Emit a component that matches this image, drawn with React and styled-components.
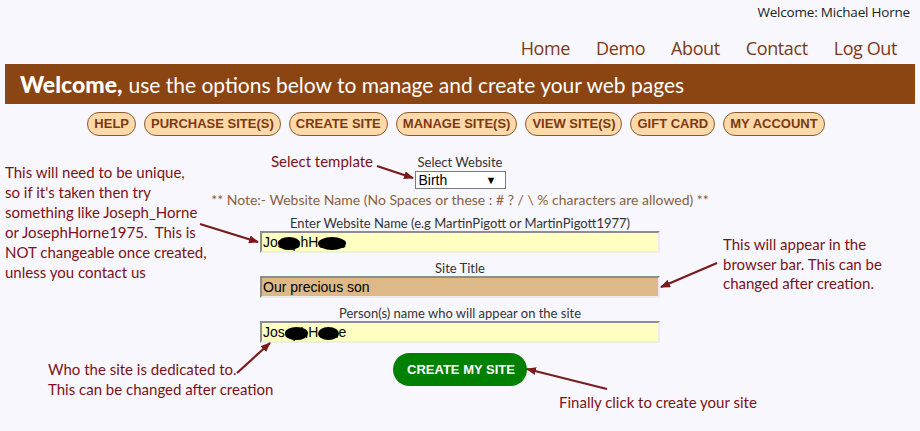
import React from 'react';
import styled, { createGlobalStyle } from 'styled-components';

const GlobalStyle = createGlobalStyle`
  body {
    margin: 0;
    background: #f7f7fd;
    font-family: Lato, "Open Sans", sans-serif;
  }
`;

const menuItems = [
  'HELP',
  'PURCHASE SITE(S)',
  'CREATE SITE',
  'MANAGE SITE(S)',
  'VIEW SITE(S)',
  'GIFT CARD',
  'MY ACCOUNT',
];

const navItems = ['Home', 'Demo', 'About', 'Contact', 'Log Out'];

// annotation arrows drawn over the screenshot: [x1, y1, tipX, tipY]
const arrows = [
  [377, 166, 413, 178],
  [200, 224, 258, 242],
  [717, 263, 661, 287],
  [237, 373, 270, 343],
  [607, 389, 527, 369],
];

const Page = styled.div`
  position: relative;
  width: 920px;
  height: 431px;
  overflow: hidden;
`;

const TopLine = styled.div`
  height: 24px;
  line-height: 24px;
  padding-right: 10px;
  text-align: right;
  font-family: "Open Sans", sans-serif;
  font-size: 13.5px;
  letter-spacing: -0.2px;
  color: #222;
`;

const Nav = styled.nav`
  display: flex;
  justify-content: flex-end;
  gap: 26px;
  height: 32px;
  padding: 8px 23px 0 0;
`;

const NavLink = styled.span`
  font-family: "Open Sans", sans-serif;
  font-size: 18px;
  line-height: 32px;
  letter-spacing: -0.4px;
  color: #7b3a16;
`;

const Banner = styled.div`
  display: flex;
  align-items: baseline;
  gap: 6px;
  height: 40px;
  margin: 0 5px;
  padding-left: 15px;
  background: #8b4513;
  color: #fff;
  line-height: 40px;
`;

const BannerStrong = styled.strong`
  font-size: 23px;
  font-weight: 900;
`;

const BannerText = styled.span`
  font-size: 21px;
`;

const Menu = styled.div`
  display: flex;
  justify-content: center;
  gap: 8px;
  margin-top: 8px;
  padding-right: 8px;
`;

const MenuButton = styled.span`
  height: 22px;
  line-height: 22px;
  padding: 0 6px;
  border: 1px solid #8b5a2b;
  border-radius: 12px;
  background: #fdd8a8;
  color: #7b3a12;
  font-family: "Liberation Sans", Arial, sans-serif;
  font-weight: bold;
  font-size: 13px;
`;

const Form = styled.div`
  display: flex;
  flex-direction: column;
  align-items: center;
`;

const Label = styled.div`
  margin-top: ${(p) => p.$top}px;
  line-height: 15px;
  font-size: 13px;
  color: #333;
`;

const Select = styled.div`
  display: flex;
  justify-content: space-between;
  align-items: center;
  box-sizing: border-box;
  width: 91px;
  height: 18px;
  margin-top: 1px;
  padding: 0 8px 0 3px;
  border: 1px solid #7a7a7a;
  background: #fff;
  font-family: "Liberation Sans", Arial, sans-serif;
  font-size: 14px;
  color: #000;
`;

const Caret = styled.span`
  font-size: 11px;
`;

const Note = styled.div`
  margin-top: 2px;
  line-height: 18px;
  font-size: 14px;
  color: #8b5e3c;
`;

const Input = styled.div`
  box-sizing: border-box;
  width: 400px;
  height: 22px;
  padding-left: 1px;
  border-style: solid;
  border-width: 2px;
  border-color: #8d8d8d #ececec #ececec #8d8d8d;
  background: ${(p) => p.$fill || '#ffffc2'};
  font-family: "Liberation Sans", Arial, sans-serif;
  font-size: 14px;
  line-height: 18px;
  color: #000;
`;

const Blob = styled.span`
  display: inline-block;
  background: #000;
  color: #000;
  border-radius: 50%;
  line-height: 13px;
  vertical-align: middle;
`;

const CreateButton = styled.div`
  margin-top: 10px;
  height: 33px;
  line-height: 33px;
  padding: 0 12px 0 14px;
  border-radius: 17px;
  background: #008000;
  color: #fff;
  font-family: "Liberation Sans", Arial, sans-serif;
  font-weight: bold;
  font-size: 13px;
`;

// hand-written notes laid over the screenshot
const Callout = styled.div`
  position: absolute;
  left: ${(p) => p.$x}px;
  top: ${(p) => p.$y}px;
  line-height: ${(p) => p.$lh || 20}px;
  font-size: 15px;
  color: #7b1218;
  white-space: nowrap;
`;

const Arrows = styled.svg`
  position: absolute;
  left: 0;
  top: 0;
  pointer-events: none;
`;

const App = () => {
  return (
    <Page>
      <GlobalStyle />
      <TopLine>Welcome: Michael Horne</TopLine>
      <Nav>
        {navItems.map((item) => (
          <NavLink key={item}>{item}</NavLink>
        ))}
      </Nav>
      <Banner>
        <BannerStrong>Welcome,</BannerStrong>
        <BannerText>
          use the options below to manage and create your web pages
        </BannerText>
      </Banner>
      <Menu>
        {menuItems.map((item) => (
          <MenuButton key={item}>{item}</MenuButton>
        ))}
      </Menu>

      <Form>
        <Label $top={19}>Select Website</Label>
        <Select>
          <span>Birth</span>
          <Caret>▼</Caret>
        </Select>
        <Note>
          ** Note:- Website Name (No Spaces or these : # ? / \ % characters are
          allowed) **
        </Note>
        <Label $top={7}>
          Enter Website Name (e.g MartinPigott or MartinPigott1977)
        </Label>
        <Input>
          Jo<Blob>sep</Blob>hH<Blob>orne</Blob>
        </Input>
        <Label $top={8}>Site Title</Label>
        <Input $fill="#deb887">Our precious son</Input>
        <Label $top={8}>Person(s) name who will appear on the site</Label>
        <Input>
          Jos<Blob>eph</Blob>H<Blob>orn</Blob>e
        </Input>
        <CreateButton>CREATE MY SITE</CreateButton>
      </Form>

      <Callout $x={271} $y={151}>
        Select template
      </Callout>
      <Callout $x={5} $y={162}>
        This will need to be unique,
        <br />
        so if it's taken then try
        <br />
        something like Joseph_Horne
        <br />
        or JosephHorne1975.&nbsp; This is
        <br />
        NOT changeable once created,
        <br />
        unless you contact us
      </Callout>
      <Callout $x={723} $y={235} $lh={19.5}>
        This will appear in the
        <br />
        browser bar. This can be
        <br />
        changed after creation.
      </Callout>
      <Callout $x={48} $y={360} $lh={19.5}>
        Who the site is dedicated to.
        <br />
        This can be changed after creation
      </Callout>
      <Callout $x={559} $y={392}>
        Finally click to create your site
      </Callout>

      <Arrows width="920" height="431" viewBox="0 0 920 431">
        <defs>
          <marker
            id="head"
            markerWidth="10"
            markerHeight="8"
            refX="9"
            refY="4"
            orient="auto"
            markerUnits="userSpaceOnUse"
          >
            <path d="M0,0 L10,4 L0,8 Z" fill="#7a1a1d" />
          </marker>
        </defs>
        {arrows.map(([x1, y1, x2, y2], i) => (
          <line
            key={i}
            x1={x1}
            y1={y1}
            x2={x2}
            y2={y2}
            stroke="#7a1a1d"
            strokeWidth="2.2"
            markerEnd="url(#head)"
          />
        ))}
      </Arrows>
    </Page>
  );
};

export default App;
